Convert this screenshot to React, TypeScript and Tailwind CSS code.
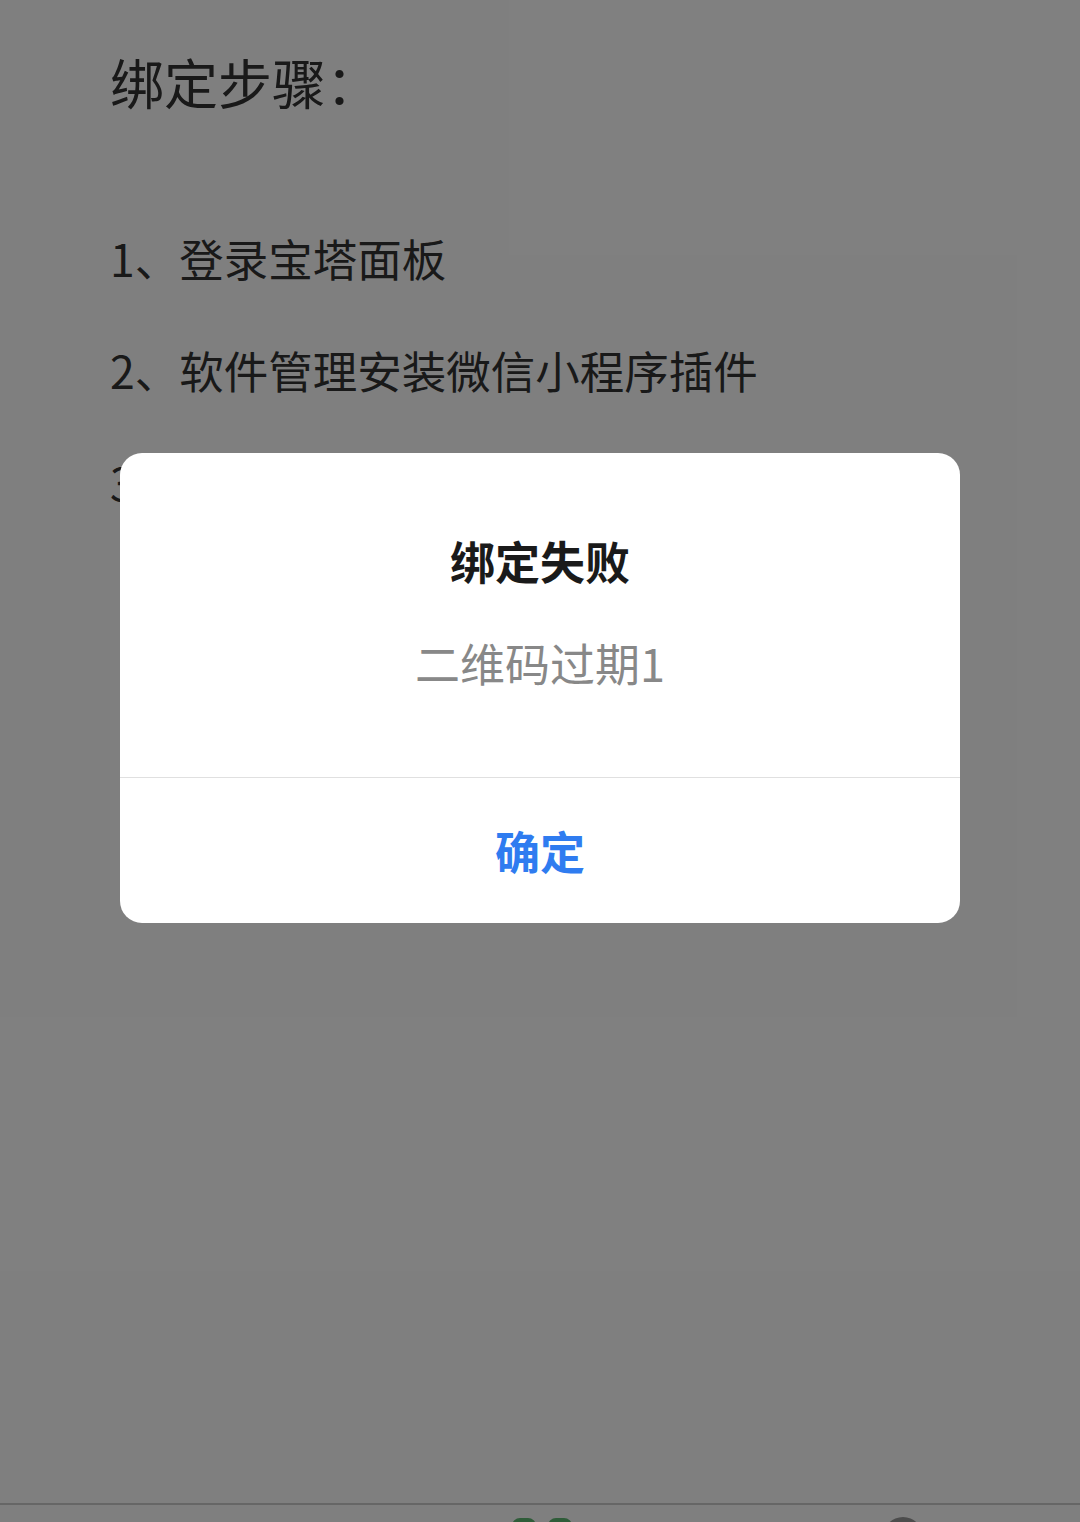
export default function App() {
  const font = { fontFamily: '"Noto Sans CJK SC", "Noto Sans", sans-serif' }
  return (
    <div className="relative h-[1522px] w-[1080px] overflow-hidden bg-white" style={font}>
      <div className="h-[1503px] pl-[110px] pt-[55px] text-[#333333]">
        <div className="h-[54px] text-[54px] leading-[54px]">绑定步骤：</div>
        <div className="mt-[93px]">
          <div className="h-[112px] text-[44.5px] leading-[112px]">1、登录宝塔面板</div>
          <div className="h-[112px] text-[44.5px] leading-[112px]">2、软件管理安装微信小程序插件</div>
          <div className="h-[112px] text-[44.5px] leading-[112px]">3、扫描二维码绑定账号</div>
        </div>
      </div>

      <div className="grid h-[150px] grid-cols-3 border-t-2 border-[#cccccc] bg-white">
        <div />
        <div className="flex justify-center pt-[11px]">
          <svg width="64" height="64" viewBox="0 0 64 64">
            <rect x="4" y="2" width="24" height="24" rx="8" fill="#5fb872" />
            <rect x="40" y="2" width="24" height="24" rx="8" fill="#5fb872" />
            <rect x="4" y="38" width="24" height="24" rx="8" fill="#5fb872" />
            <rect x="40" y="38" width="24" height="24" rx="8" fill="#5fb872" />
          </svg>
        </div>
        <div className="flex justify-center pl-[6px] pt-[10px]">
          <svg width="64" height="64" viewBox="0 0 64 64">
            <circle cx="32" cy="22" r="20" fill="#999999" />
            <path d="M4 64c0-16 12-24 28-24s28 8 28 24z" fill="#999999" />
          </svg>
        </div>
      </div>

      <div className="absolute inset-0 flex justify-center bg-black/50 pt-[453px]">
        <div className="h-[470px] w-[840px] overflow-hidden rounded-[22px] bg-white">
          <div className="flex h-[324px] flex-col items-center pt-[78px]">
            <div className="h-[60px] text-[45px] font-bold leading-[60px] text-[#1a1a1a]">绑定失败</div>
            <div className="mt-[42px] h-[60px] text-[45px] leading-[60px] text-[#888888]">二维码过期1</div>
          </div>
          <div className="flex h-[146px] items-center justify-center border-t border-[#e0e0e0] text-[45px] font-bold text-[#2f7cf0]">
            确定
          </div>
        </div>
      </div>
    </div>
  )
}
